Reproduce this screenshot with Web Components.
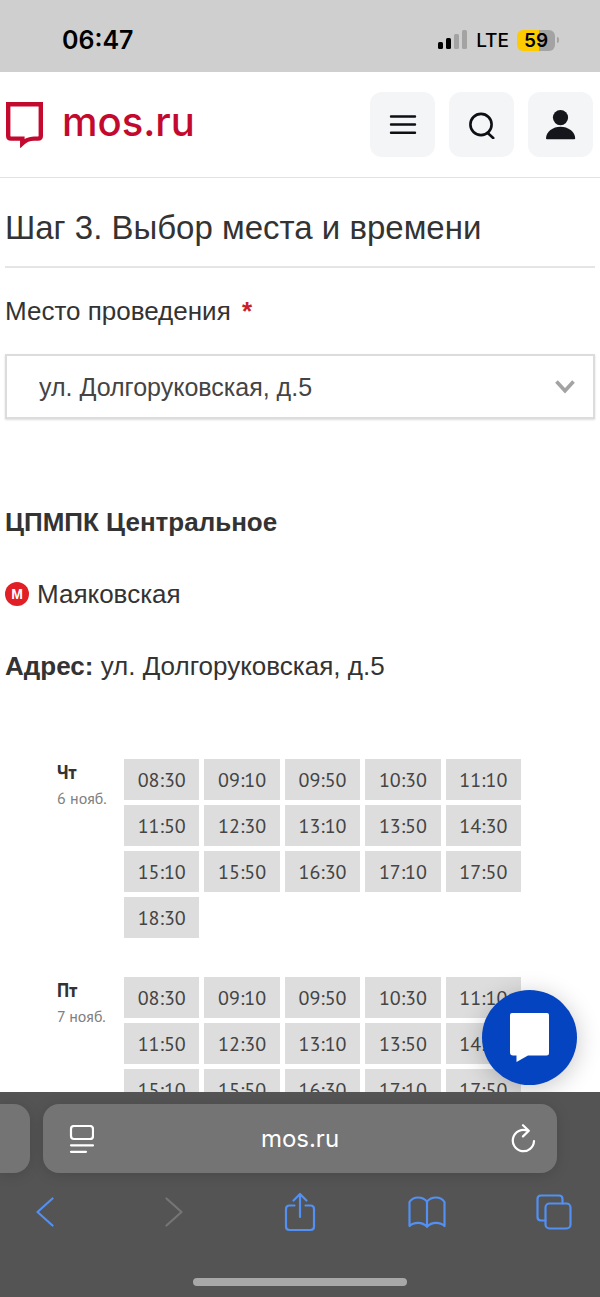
<!DOCTYPE html>
<html lang="ru">
<head>
<meta charset="utf-8">
<meta name="viewport" content="width=device-width, initial-scale=1">
<title>mos.ru</title>
<style>
  html, body {
    margin: 0;
    height: 100%;
  }
  body {
    display: flex;
    flex-direction: column;
    overflow: hidden;
    font-family: "Liberation Sans", Arial, sans-serif;
    color: #333;
    background: #fff;
  }
</style>
</head>
<body>
<status-bar time="06:47" network="LTE" battery="59"></status-bar>
<site-header></site-header>
<page-content>
  <step-title>Шаг 3. Выбор места и времени</step-title>
  <place-select label="Место проведения" value="ул. Долгоруковская, д.5"></place-select>
  <place-info address="ул. Долгоруковская, д.5">
    <span slot="name">ЦПМПК Центральное</span>
    <span slot="station">Маяковская</span>
  </place-info>
  <day-slots day="Чт" date="6 нояб."></day-slots>
  <day-slots day="Пт" date="7 нояб."></day-slots>
  <chat-button slot="over"></chat-button>
</page-content>
<browser-bar>mos.ru</browser-bar>

<script>
class StatusBar extends HTMLElement {
  constructor() {
    super();
    this.shadowDOM = this.attachShadow({ mode: "open" });
  }

  connectedCallback() {
    this.render();
  }

  render() {
    const battery = this.getAttribute("battery");
    this.shadowDOM.innerHTML = `
      <style>
      :host {
        display: flex;
        flex: none;
        align-items: center;
        justify-content: space-between;
        box-sizing: border-box;
        height: 72px;
        padding: 8px 41px 0 62px;
        background: #cfcfcf;
        color: #000;
        font-family: Inter, sans-serif;
      }
      .time {
        font-size: 25px;
        font-weight: 600;
      }
      .right {
        display: flex;
        align-items: center;
        gap: 8px;
      }
      .network {
        font-size: 19px;
        font-weight: 500;
      }
      .battery {
        display: flex;
        align-items: center;
        gap: 2px;
      }
      .level {
        width: 38px;
        height: 21px;
        border-radius: 6px;
        background: linear-gradient(to right, #fecb00 ${battery}%, #a3a3a3 ${battery}%);
        font-size: 19px;
        font-weight: 600;
        line-height: 22px;
        text-align: center;
      }
      .nub {
        width: 2px;
        height: 6px;
        border-radius: 0 2px 2px 0;
        background: #a3a3a3;
      }
      </style>

      <span class="time">${this.getAttribute("time")}</span>
      <div class="right">
        <svg width="30" height="20" viewBox="0 0 30 20">
          <rect x="0" y="12" width="5" height="7" rx="1.5"/>
          <rect x="8" y="8" width="5" height="11" rx="1.5"/>
          <rect x="16" y="4" width="5" height="15" rx="1.5" fill="#a3a3a3"/>
          <rect x="24" y="0" width="5" height="19" rx="1.5" fill="#a3a3a3"/>
        </svg>
        <span class="network">${this.getAttribute("network")}</span>
        <div class="battery">
          <div class="level">${battery}</div>
          <div class="nub"></div>
        </div>
      </div>
    `;
  }
}

class SiteHeader extends HTMLElement {
  constructor() {
    super();
    this.shadowDOM = this.attachShadow({ mode: "open" });
  }

  connectedCallback() {
    this.render();
  }

  render() {
    this.shadowDOM.innerHTML = `
      <style>
      :host {
        display: flex;
        flex: none;
        align-items: center;
        justify-content: space-between;
        box-sizing: border-box;
        height: 106px;
        padding: 0 7px 0 6px;
        border-bottom: 1px solid #e2e2e4;
        background: #fff;
      }
      .logo {
        display: flex;
        align-items: flex-start;
        gap: 18px;
        color: #c4092f;
        font: 500 40px/40px Inter, sans-serif;
        text-decoration: none;
      }
      nav {
        display: flex;
        gap: 14px;
      }
      button {
        display: grid;
        place-items: center;
        width: 65px;
        height: 65px;
        padding: 0;
        border: 0;
        border-radius: 12px;
        background: #f4f5f7;
      }
      </style>

      <a class="logo" href="#">
        <svg width="38" height="46" viewBox="0 0 38 46">
          <path d="M2.2 2.2H34.8V34Q34.8 36.6 32 36.6H28Q21 36.8 16.4 41.2V36.6H5Q2.2 36.6 2.2 34Z" fill="none" stroke="#c4092f" stroke-width="4.4"/>
          <path d="M14.2 36V45.5L21 40Z" fill="#c4092f"/>
        </svg>
        <span>mos.ru</span>
      </a>
      <nav>
        <button type="button" aria-label="Меню">
          <svg width="28" height="22" viewBox="0 0 28 22" stroke="#0d0f14" stroke-width="2.4" stroke-linecap="round">
            <path d="M2 2.5H26M2 10.5H26M2 18.8H26"/>
          </svg>
        </button>
        <button type="button" aria-label="Поиск">
          <svg width="28" height="28" viewBox="0 0 28 28" fill="none" stroke="#0d0f14" stroke-width="2.6" stroke-linecap="round">
            <circle cx="13" cy="13.5" r="10.6"/>
            <path d="M19.5 21.8L25.2 27"/>
          </svg>
        </button>
        <button type="button" aria-label="Профиль">
          <svg width="30" height="30" viewBox="0 0 30 30" fill="#14161b">
            <circle cx="14.500" cy="7.600" r="7.600"/>
            <path d="M0 28.500C0 21.500 7 16.700 14.500 16.700S29.200 21.500 29.200 28.500Q29.200 29.300 28.200 29.300H1Q0 29.300 0 28.500Z"/>
          </svg>
        </button>
      </nav>
    `;
  }
}

class PageContent extends HTMLElement {
  constructor() {
    super();
    this.shadowDOM = this.attachShadow({ mode: "open" });
  }

  connectedCallback() {
    this.render();
  }

  render() {
    this.shadowDOM.innerHTML = `
      <style>
      :host {
        position: relative;
        display: block;
        flex: 1;
        min-height: 0;
        overflow: hidden;
      }
      main {
        display: flex;
        flex-direction: column;
        padding: 0 5px;
      }
      </style>

      <main><slot></slot></main>
      <slot name="over"></slot>
    `;
  }
}

class StepTitle extends HTMLElement {
  constructor() {
    super();
    this.shadowDOM = this.attachShadow({ mode: "open" });
  }

  connectedCallback() {
    this.render();
  }

  render() {
    this.shadowDOM.innerHTML = `
      <style>
      :host {
        display: block;
        padding: 30px 0 18px;
        border-bottom: 2px solid #e5e5e5;
      }
      h1 {
        margin: 0;
        font-size: 33px;
        font-weight: 400;
        line-height: 40px;
      }
      </style>

      <h1><slot></slot></h1>
    `;
  }
}

class PlaceSelect extends HTMLElement {
  constructor() {
    super();
    this.shadowDOM = this.attachShadow({ mode: "open" });
  }

  connectedCallback() {
    this.render();
  }

  render() {
    this.shadowDOM.innerHTML = `
      <style>
      :host {
        display: flex;
        flex-direction: column;
        gap: 26px;
        padding-top: 26px;
      }
      label {
        font-size: 26px;
        line-height: 34px;
      }
      .required {
        margin-left: 4px;
        color: #c8202c;
        font-weight: 700;
      }
      .field {
        display: grid;
        align-items: center;
      }
      select, svg {
        grid-area: 1 / 1;
      }
      select {
        appearance: none;
        box-sizing: border-box;
        width: 100%;
        height: 65px;
        padding: 0 60px 0 32px;
        border: 2px solid #dcdcdc;
        border-radius: 0;
        box-shadow: 0 1px 2px #ddd;
        background: #fff;
        color: #444;
        font: 25px "Liberation Sans", Arial, sans-serif;
      }
      svg {
        justify-self: end;
        margin-right: 20px;
        pointer-events: none;
      }
      </style>

      <label for="place">${this.getAttribute("label")} <span class="required">*</span></label>
      <div class="field">
        <select id="place">
          <option>${this.getAttribute("value")}</option>
        </select>
        <svg width="20" height="14" viewBox="0 0 20 14" fill="none" stroke="#a3a3a3" stroke-width="3.6">
          <path d="M1.5 1.5L10 10.8L18.5 1.5"/>
        </svg>
      </div>
    `;
  }
}

class PlaceInfo extends HTMLElement {
  constructor() {
    super();
    this.shadowDOM = this.attachShadow({ mode: "open" });
  }

  connectedCallback() {
    this.render();
  }

  render() {
    this.shadowDOM.innerHTML = `
      <style>
      :host {
        display: flex;
        flex-direction: column;
        gap: 36px;
        padding: 85px 0 75px;
        font-size: 26px;
        line-height: 36px;
      }
      h2, p {
        margin: 0;
        font-size: 26px;
      }
      .station {
        display: flex;
        align-items: center;
        gap: 8px;
      }
      .metro {
        width: 24px;
        height: 24px;
        border-radius: 50%;
        background: #e01f26;
        color: #fff;
        font-size: 14px;
        font-weight: 700;
        line-height: 24px;
        text-align: center;
      }
      </style>

      <h2><slot name="name"></slot></h2>
      <p class="station"><span class="metro">М</span><slot name="station"></slot></p>
      <p><b>Адрес:</b> ${this.getAttribute("address")}</p>
    `;
  }
}

const TIMES = [
  "08:30", "09:10", "09:50", "10:30", "11:10",
  "11:50", "12:30", "13:10", "13:50", "14:30",
  "15:10", "15:50", "16:30", "17:10", "17:50",
  "18:30",
];

class DaySlots extends HTMLElement {
  constructor() {
    super();
    this.shadowDOM = this.attachShadow({ mode: "open" });
  }

  connectedCallback() {
    this.render();
  }

  render() {
    this.shadowDOM.innerHTML = `
      <style>
      :host {
        display: grid;
        grid-template-columns: 67px 1fr;
        align-items: start;
        padding: 0 74px 39px 52px;
        font-family: "PT Sans", "Noto Sans", sans-serif;
      }
      .day {
        font-size: 19px;
        font-weight: 700;
        line-height: 26px;
      }
      .date {
        color: #808080;
        font-size: 16px;
        line-height: 26px;
        white-space: nowrap;
      }
      .times {
        display: grid;
        grid-template-columns: repeat(5, 1fr);
        gap: 5px;
      }
      button {
        height: 41px;
        padding: 0;
        border: 0;
        background: #ddd;
        color: #444;
        font: 20px "PT Sans", "Noto Sans", sans-serif;
      }
      </style>

      <div>
        <div class="day">${this.getAttribute("day")}</div>
        <div class="date">${this.getAttribute("date")}</div>
      </div>
      <div class="times">
        ${TIMES.map((time) => `<button type="button">${time}</button>`).join("")}
      </div>
    `;
  }
}

class ChatButton extends HTMLElement {
  constructor() {
    super();
    this.shadowDOM = this.attachShadow({ mode: "open" });
  }

  connectedCallback() {
    this.render();
  }

  render() {
    this.shadowDOM.innerHTML = `
      <style>
      :host {
        position: absolute;
        right: 23px;
        bottom: 7px;
        display: block;
      }
      button {
        display: grid;
        place-items: center;
        width: 95px;
        height: 95px;
        padding: 0;
        border: 0;
        border-radius: 50%;
        background: #0544c0;
        box-shadow: 0 4px 24px rgba(0, 0, 0, 0.22);
      }
      </style>

      <button type="button" aria-label="Чат">
        <svg width="40" height="50" viewBox="0 0 40 50" fill="#fff">
          <path d="M2 0H37Q39 0 39 2V40Q39 42.500 36.500 42.500H18L6.500 49V42.500H3Q0 42.500 0 39.500V2Q0 0 2 0Z"/>
        </svg>
      </button>
    `;
  }
}

class BrowserBar extends HTMLElement {
  constructor() {
    super();
    this.shadowDOM = this.attachShadow({ mode: "open" });
  }

  connectedCallback() {
    this.render();
  }

  render() {
    this.shadowDOM.innerHTML = `
      <style>
      :host {
        display: flex;
        flex: none;
        flex-direction: column;
        padding: 12px 0 11px;
        background: #545454;
        color: #fff;
      }
      .tabs {
        display: flex;
        gap: 13px;
        padding-right: 43px;
      }
      .previous, .address {
        height: 69px;
        background: #747474;
        box-shadow: 0 2px 14px rgba(0, 0, 0, 0.14);
      }
      .previous {
        width: 30px;
        border-radius: 0 16px 16px 0;
      }
      .address {
        display: flex;
        flex: 1;
        align-items: center;
        justify-content: space-between;
        box-sizing: border-box;
        padding: 0 14px;
        border-radius: 16px;
        font: 24px/30px Inter, sans-serif;
      }
      button {
        display: grid;
        place-items: center;
        height: 48px;
        padding: 0;
        border: 0;
        background: none;
      }
      .address button {
        width: 48px;
      }
      .tools {
        display: flex;
        justify-content: space-between;
        padding: 15px 18px 0 17px;
      }
      .tools button {
        width: 56px;
      }
      svg {
        fill: none;
        stroke: #5290f4;
        stroke-width: 2.2;
        stroke-linecap: round;
        stroke-linejoin: round;
      }
      .address svg {
        stroke: #fff;
      }
      .disabled svg {
        stroke: #757575;
      }
      .home {
        align-self: center;
        width: 214px;
        height: 8px;
        margin-top: 42px;
        border-radius: 4px;
        background: #a8a8a8;
      }
      </style>

      <div class="tabs">
        <div class="previous"></div>
        <div class="address">
          <button type="button" aria-label="Меню страницы">
            <svg width="26" height="28" viewBox="-2 0 26 28">
              <rect x="1" y="1" width="22" height="13" rx="3"/>
              <path d="M1 20.3H23M1 26.8H16"/>
            </svg>
          </button>
          <slot></slot>
          <button type="button" aria-label="Обновить">
            <svg width="34" height="30" viewBox="-8 0 34 30">
              <path d="M24 17A10.6 10.6 0 1 1 17.5 6.8M13 1.2L18.8 6.8L13 12.4"/>
            </svg>
          </button>
        </div>
      </div>
      <div class="tools">
        <button type="button" aria-label="Назад">
          <svg width="18" height="30" viewBox="0 0 18 30"><path d="M16.5 1.5L1.5 15L16.5 28.5"/></svg>
        </button>
        <button type="button" class="disabled" aria-label="Вперёд" disabled>
          <svg width="22" height="30" viewBox="0 0 22 30"><path d="M5.5 1.5L20.5 15L5.5 28.5"/></svg>
        </button>
        <button type="button" aria-label="Поделиться">
          <svg width="32" height="40" viewBox="0 0 32 40">
            <path d="M10.5 13.5H5.5Q2 13.5 2 17V34.5Q2 38 5.5 38H26.5Q30 38 30 34.5V17Q30 13.5 26.5 13.5H21.5M16 25V2.5M9.5 8.5L16 2L22.5 8.5"/>
          </svg>
        </button>
        <button type="button" aria-label="Закладки">
          <svg width="38" height="32" viewBox="0 0 38 32">
            <path d="M19 5.5Q15.5 1.5 10 1.5T1.500 6V30Q4.500 26.800 10 26.800T19 30.800Q22.500 26.800 28 26.800T36.500 30V6Q33.500 1.500 28 1.500T19 5.500V30.500"/>
          </svg>
        </button>
        <button type="button" aria-label="Вкладки">
          <svg width="36" height="36" viewBox="0 0 36 36">
            <rect x="9.5" y="9.5" width="25" height="25" rx="4"/>
            <path d="M9.5 26.5H5Q1.5 26.5 1.5 23V5Q1.5 1.5 5 1.5H23Q26.5 1.5 26.5 5V9.5"/>
          </svg>
        </button>
      </div>
      <div class="home"></div>
    `;
  }
}

customElements.define("status-bar", StatusBar);
customElements.define("site-header", SiteHeader);
customElements.define("page-content", PageContent);
customElements.define("step-title", StepTitle);
customElements.define("place-select", PlaceSelect);
customElements.define("place-info", PlaceInfo);
customElements.define("day-slots", DaySlots);
customElements.define("chat-button", ChatButton);
customElements.define("browser-bar", BrowserBar);
</script>
</body>
</html>
